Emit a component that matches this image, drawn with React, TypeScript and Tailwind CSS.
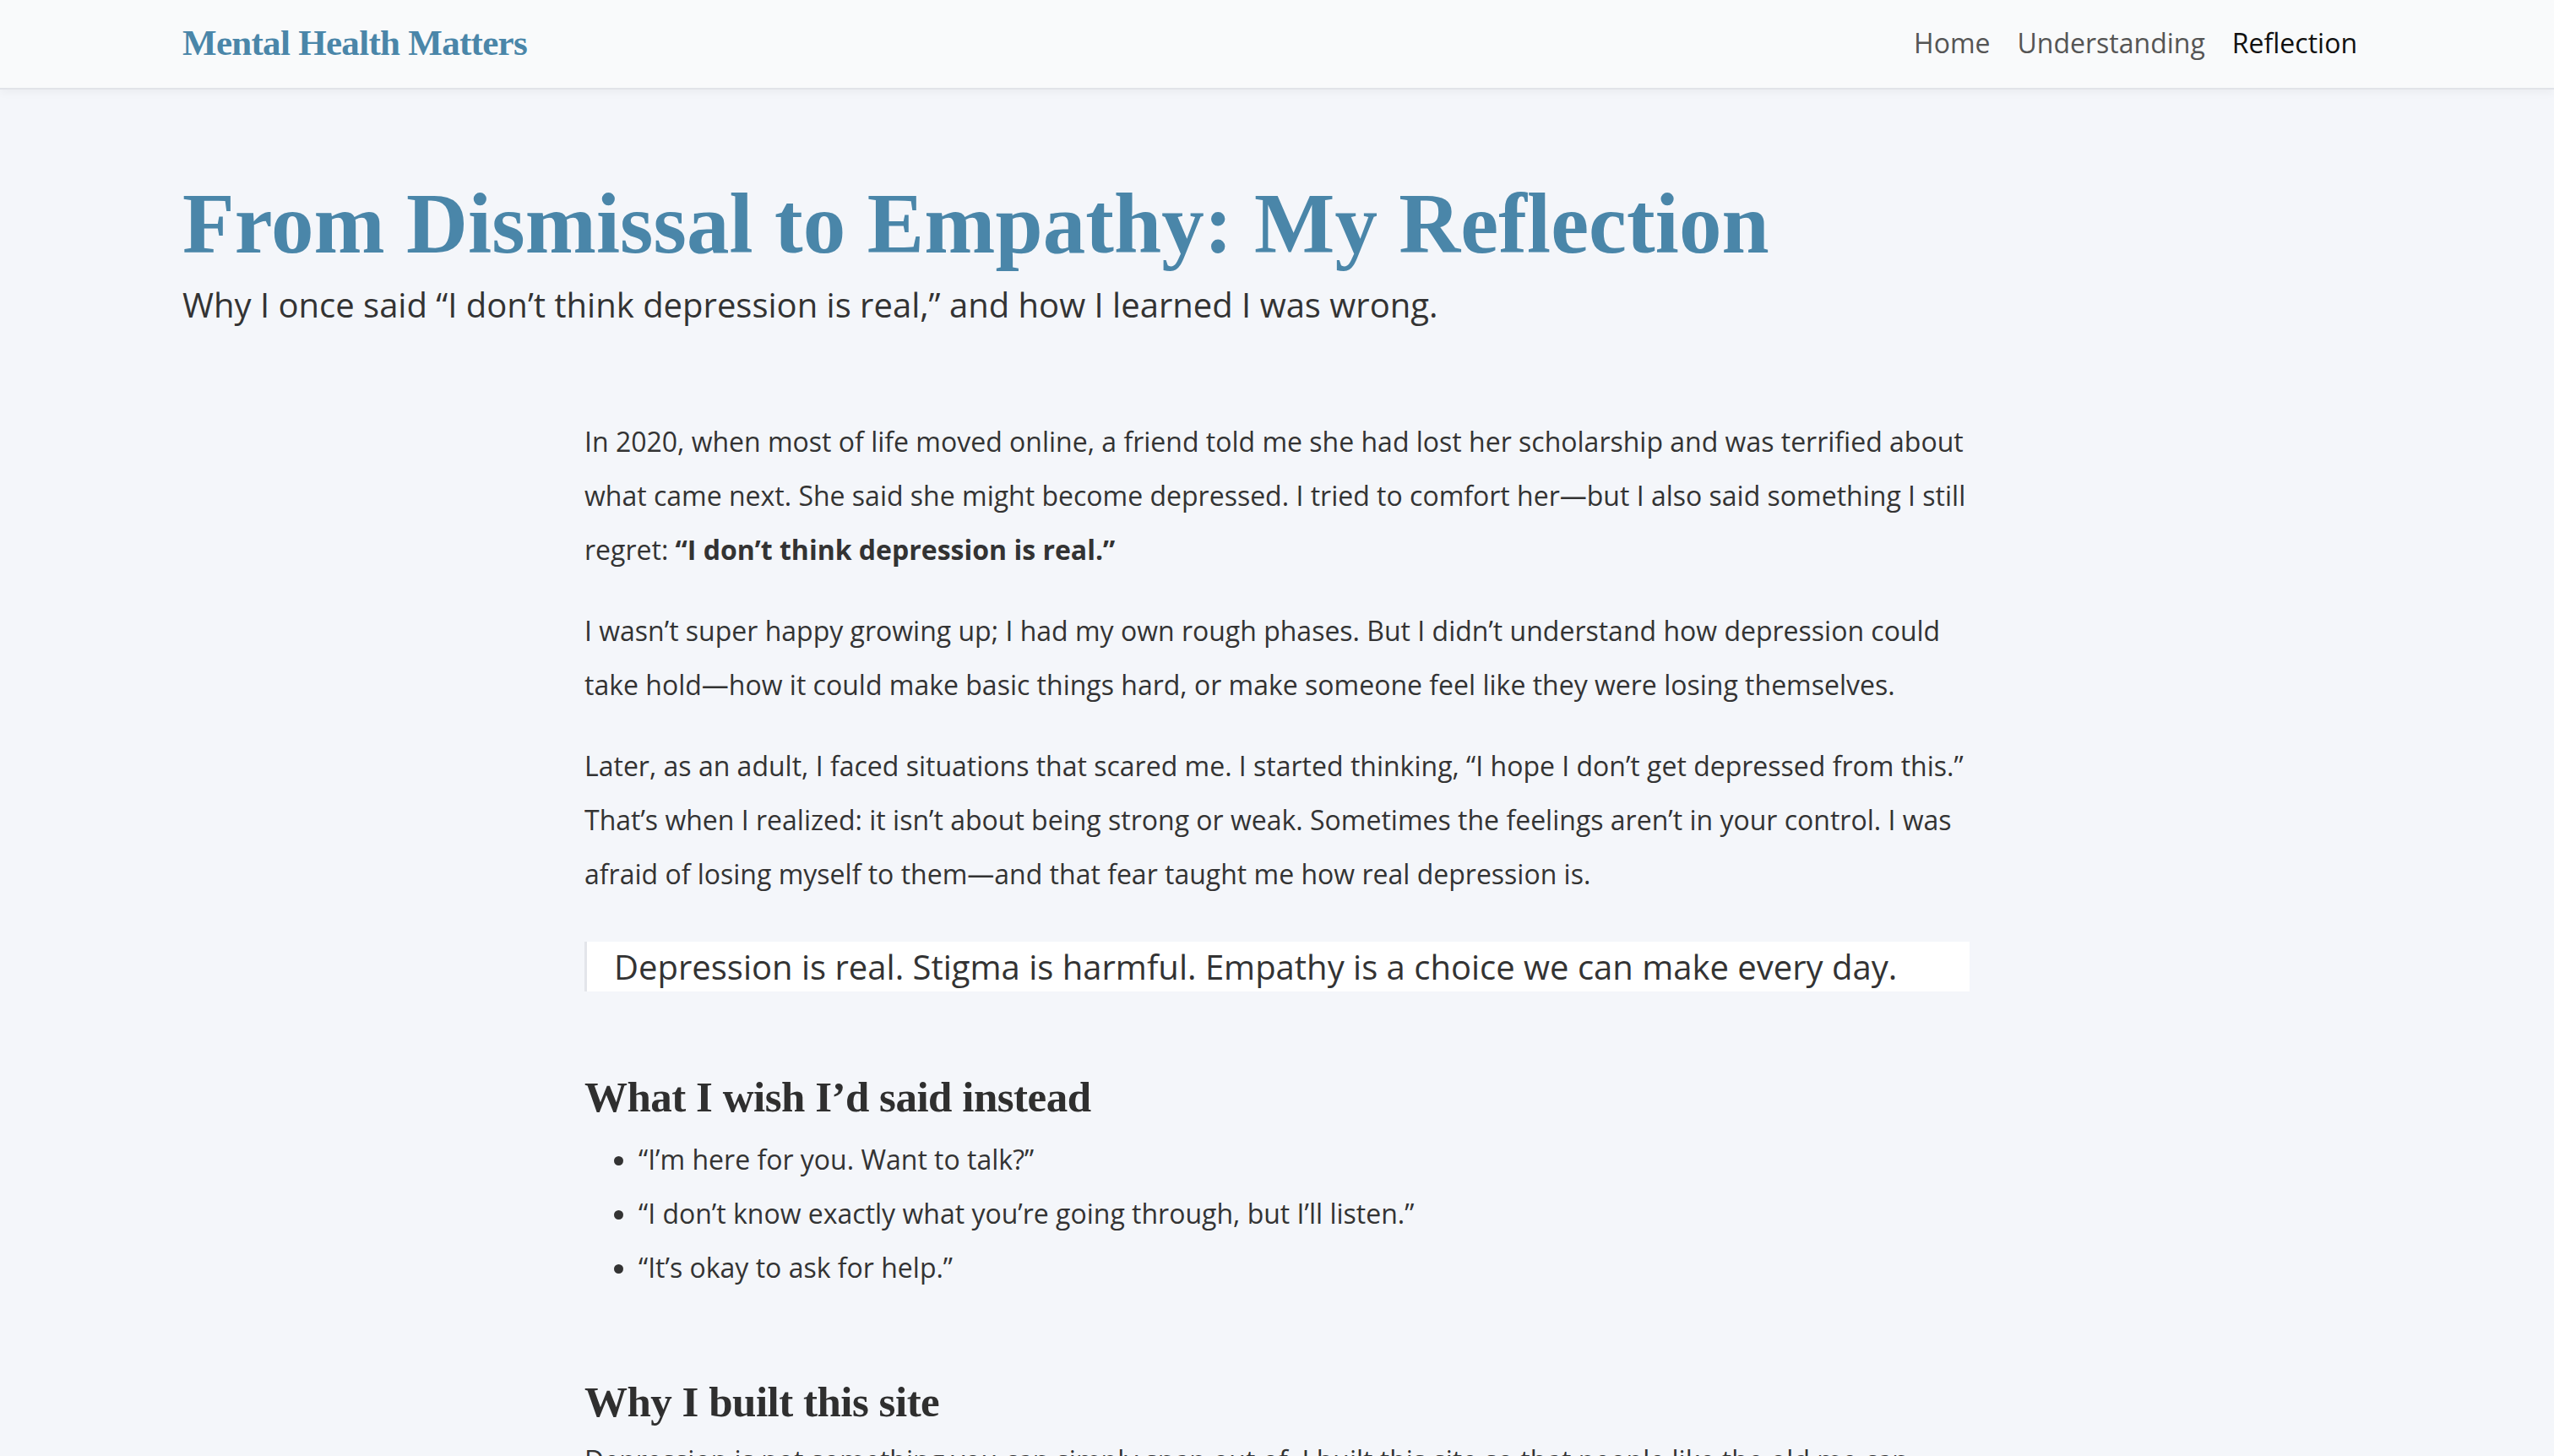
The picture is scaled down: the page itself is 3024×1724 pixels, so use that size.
import React from 'react';

const serif = "font-['Liberation_Serif','Times_New_Roman',serif]";
const sans = "font-['Open_Sans','Noto_Sans',sans-serif]";

const links = [
  { label: 'Home', active: false },
  { label: 'Understanding', active: false },
  { label: 'Reflection', active: true },
];

const wishes = [
  '“I’m here for you. Want to talk?”',
  '“I don’t know exactly what you’re going through, but I’ll listen.”',
  '“It’s okay to ask for help.”',
];

export default function App() {
  return (
    <div className={`min-h-screen bg-[#f4f6fa] text-[#333] ${sans}`}>
      {/* top bar */}
      <header className="h-[106px] bg-[#f9fafb] border-b-2 border-[#e1e3e8] shadow-[0_4px_10px_rgba(0,0,0,0.04)]">
        <div className="h-full px-[216px] flex items-center justify-between">
          <a className={`${serif} text-[43px] font-bold text-[#4a86a9] tracking-[-0.7px] -mt-[2px]`}>Mental Health Matters</a>
          <nav className="flex gap-[32px] text-[32px] mr-[17px] -mt-[3px]">
            {links.map(l => (
              <a key={l.label} className={l.active ? 'text-[#111]' : 'text-[#555]'}>
                {l.label}
              </a>
            ))}
          </nav>
        </div>
      </header>

      <main className="px-[216px]">
        <div className="pt-[102px]">
          <h1 className={`${serif} text-[101px] leading-[115px] font-bold tracking-[0.1px] text-[#4a86a9]`}>
            From Dismissal to Empathy: My Reflection
          </h1>
          <p className="mt-[8px] text-[40px] leading-[60px] text-[#333]">
            Why I once said “I don’t think depression is real,” and how I learned I was wrong.
          </p>
        </div>

        <article className="w-[1640px] mx-auto mt-[100px] text-[32px] leading-[64px]">
          <p className="mb-[32px]">
            In 2020, when most of life moved online, a friend told me she had lost her scholarship and was terrified about
            what came next. She said she might become depressed. I tried to comfort her—but I also said something I still
            regret: <strong className="font-bold">“I don’t think depression is real.”</strong>
          </p>
          <p className="mb-[32px]">
            I wasn’t super happy growing up; I had my own rough phases. But I didn’t understand how depression could take
            hold—how it could make basic things hard, or make someone feel like they were losing themselves.
          </p>
          <p>
            Later, as an adult, I faced situations that scared me. I started thinking, “I hope I don’t get depressed from
            this.” That’s when I realized: it isn’t about being strong or weak. Sometimes the feelings aren’t in your
            control. I was afraid of losing myself to them—and that fear taught me how real depression is.
          </p>

          <blockquote className="mt-[48px] bg-white border-l-[3px] border-[#e3e5ea] pl-[32px] pr-[32px] text-[40px] leading-[59px] text-[#333]">
            Depression is real. Stigma is harmful. Empathy is a choice we can make every day.
          </blockquote>

          <section className="mt-[92px]">
            <h2 className={`${serif} text-[51px] leading-[66px] font-bold tracking-[-0.5px] text-[#2f2f2f] mb-[9px]`}>
              What I wish I’d said instead
            </h2>
            <ul className="list-disc pl-[64px]">
              {wishes.map(w => (
                <li key={w}>{w}</li>
              ))}
            </ul>
          </section>

          <section className="mt-[94px]">
            <h2 className={`${serif} text-[51px] leading-[66px] font-bold tracking-[-0.5px] text-[#2f2f2f] mb-[4px]`}>
              Why I built this site
            </h2>
            <p className="mb-[32px]">
              Depression is not something you can simply snap out of. I built this site so that people like the old me can
              learn what it really is, and so that anyone who is struggling knows they are not alone.
            </p>
          </section>
        </article>
      </main>
    </div>
  );
}
